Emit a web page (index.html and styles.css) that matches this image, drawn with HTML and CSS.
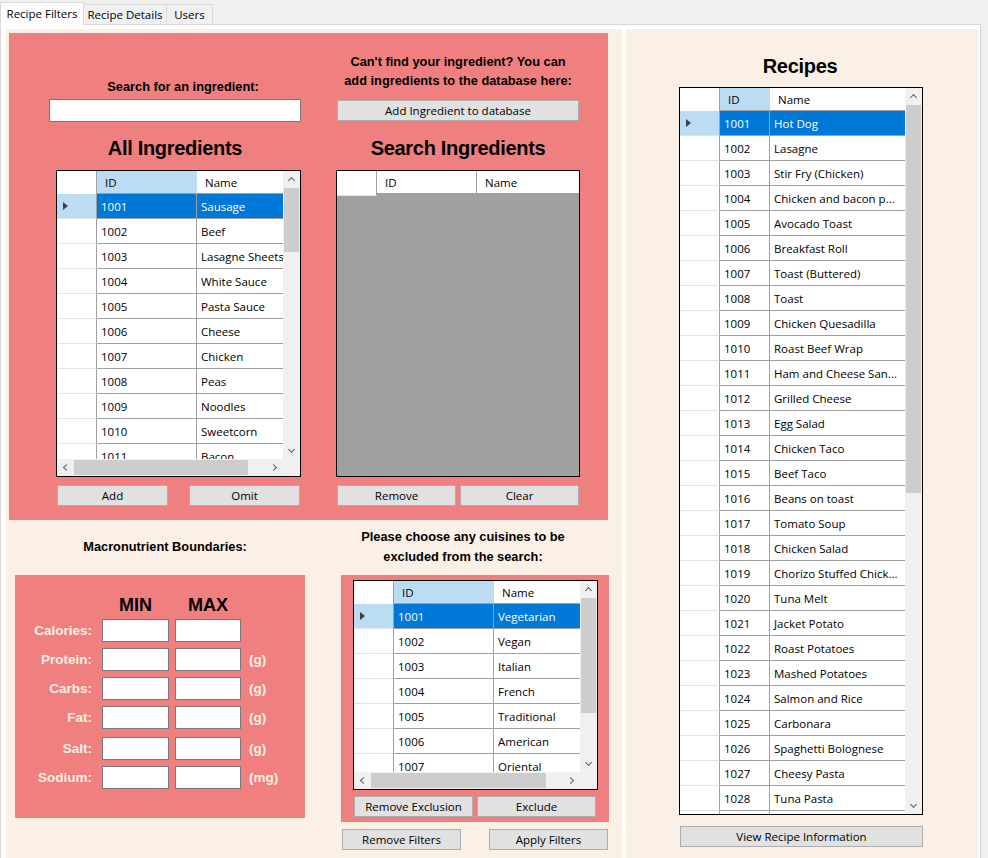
FILE: index.html
```html
<!DOCTYPE html>
<html lang="en">
<head>
    <meta charset="UTF-8">
    <title>Recipe Filters</title>
    <link rel="stylesheet" href="styles.css">
</head>
<body>
    <div class="tabs">
        <div class="tab active">Recipe Filters</div>
        <div class="tab">Recipe Details</div>
        <div class="tab tab-users">Users</div>
    </div>

    <div class="page">
        <div class="left">
            <div class="filter-box">
                <div class="col col-search">
                    <p class="lbl search-lbl">Search for an ingredient:</p>
                    <input class="txt search-txt" type="text">
                    <p class="title">All Ingredients</p>

                    <div class="dgv ing">
                        <div class="dgv-main">
                            <div class="dgv-head">
                                <span class="hc rh"></span>
                                <span class="hc id cur">ID</span>
                                <span class="hc nm">Name</span>
                            </div>
                            <div class="row sel"><span class="rh"></span><span class="c id">1001</span><span class="c nm">Sausage</span></div>
                            <div class="row"><span class="rh"></span><span class="c id">1002</span><span class="c nm">Beef</span></div>
                            <div class="row"><span class="rh"></span><span class="c id">1003</span><span class="c nm">Lasagne Sheets</span></div>
                            <div class="row"><span class="rh"></span><span class="c id">1004</span><span class="c nm">White Sauce</span></div>
                            <div class="row"><span class="rh"></span><span class="c id">1005</span><span class="c nm">Pasta Sauce</span></div>
                            <div class="row"><span class="rh"></span><span class="c id">1006</span><span class="c nm">Cheese</span></div>
                            <div class="row"><span class="rh"></span><span class="c id">1007</span><span class="c nm">Chicken</span></div>
                            <div class="row"><span class="rh"></span><span class="c id">1008</span><span class="c nm">Peas</span></div>
                            <div class="row"><span class="rh"></span><span class="c id">1009</span><span class="c nm">Noodles</span></div>
                            <div class="row"><span class="rh"></span><span class="c id">1010</span><span class="c nm">Sweetcorn</span></div>
                            <div class="row"><span class="rh"></span><span class="c id">1011</span><span class="c nm">Bacon</span></div>
                        </div>
                        <div class="vscroll">
                            <span class="arr up"></span>
                            <span class="track"><span class="thumb"></span></span>
                            <span class="arr down"></span>
                        </div>
                        <div class="hscroll">
                            <span class="arr lft"></span>
                            <span class="track"><span class="thumb"></span></span>
                            <span class="arr rgt"></span>
                        </div>
                        <div class="corner"></div>
                    </div>

                    <div class="btn-row">
                        <button class="btn btn-wide">Add</button>
                        <button class="btn btn-wide">Omit</button>
                    </div>
                </div>

                <div class="col col-results">
                    <p class="lbl add-lbl">Can't find your ingredient? You can<br>add ingredients to the database here:</p>
                    <button class="btn btn-add">Add Ingredient to database</button>
                    <p class="title">Search Ingredients</p>

                    <div class="dgv empty">
                        <div class="dgv-head">
                            <span class="hc rh"></span>
                            <span class="hc id">ID</span>
                            <span class="hc nm">Name</span>
                        </div>
                    </div>

                    <div class="btn-row">
                        <button class="btn">Remove</button>
                        <button class="btn">Clear</button>
                    </div>
                </div>
            </div>

            <div class="bottom">
                <div class="macros">
                    <p class="lbl macro-lbl">Macronutrient Boundaries:</p>
                    <div class="macro-box">
                        <div class="mrow mhead">
                            <span class="mlbl"></span>
                            <span class="mcol min">MIN</span>
                            <span class="mcol max">MAX</span>
                        </div>
                        <div class="mrow"><span class="mlbl">Calories:</span><input class="txt min" type="text"><input class="txt max" type="text"></div>
                        <div class="mrow"><span class="mlbl">Protein:</span><input class="txt min" type="text"><input class="txt max" type="text"><span class="unit">(g)</span></div>
                        <div class="mrow"><span class="mlbl">Carbs:</span><input class="txt min" type="text"><input class="txt max" type="text"><span class="unit">(g)</span></div>
                        <div class="mrow"><span class="mlbl">Fat:</span><input class="txt min" type="text"><input class="txt max" type="text"><span class="unit">(g)</span></div>
                        <div class="mrow salt"><span class="mlbl">Salt:</span><input class="txt min" type="text"><input class="txt max" type="text"><span class="unit">(g)</span></div>
                        <div class="mrow"><span class="mlbl">Sodium:</span><input class="txt min" type="text"><input class="txt max" type="text"><span class="unit">(mg)</span></div>
                    </div>
                </div>

                <div class="cuisines">
                    <p class="lbl cuisine-lbl">Please choose any cuisines to be<br>excluded from the search:</p>
                    <div class="cuisine-box">
                        <div class="dgv cus">
                            <div class="dgv-main">
                                <div class="dgv-head">
                                    <span class="hc rh"></span>
                                    <span class="hc id cur">ID</span>
                                    <span class="hc nm">Name</span>
                                </div>
                                <div class="row sel"><span class="rh"></span><span class="c id">1001</span><span class="c nm">Vegetarian</span></div>
                                <div class="row"><span class="rh"></span><span class="c id">1002</span><span class="c nm">Vegan</span></div>
                                <div class="row"><span class="rh"></span><span class="c id">1003</span><span class="c nm">Italian</span></div>
                                <div class="row"><span class="rh"></span><span class="c id">1004</span><span class="c nm">French</span></div>
                                <div class="row"><span class="rh"></span><span class="c id">1005</span><span class="c nm">Traditional</span></div>
                                <div class="row"><span class="rh"></span><span class="c id">1006</span><span class="c nm">American</span></div>
                                <div class="row"><span class="rh"></span><span class="c id">1007</span><span class="c nm">Oriental</span></div>
                            </div>
                            <div class="vscroll">
                                <span class="arr up"></span>
                                <span class="track"><span class="thumb"></span></span>
                                <span class="arr down"></span>
                            </div>
                            <div class="hscroll">
                                <span class="arr lft"></span>
                                <span class="track"><span class="thumb"></span></span>
                                <span class="arr rgt"></span>
                            </div>
                            <div class="corner"></div>
                        </div>
                        <div class="btn-row">
                            <button class="btn">Remove Exclusion</button>
                            <button class="btn">Exclude</button>
                        </div>
                    </div>
                    <div class="btn-row filter-btns">
                        <button class="btn">Remove Filters</button>
                        <button class="btn">Apply Filters</button>
                    </div>
                </div>
            </div>
        </div>

        <div class="right">
            <p class="title recipes-title">Recipes</p>
            <div class="dgv rec">
                <div class="dgv-main">
                    <div class="dgv-head">
                        <span class="hc rh"></span>
                        <span class="hc id cur">ID</span>
                        <span class="hc nm">Name</span>
                    </div>
                    <div class="row sel"><span class="rh"></span><span class="c id">1001</span><span class="c nm">Hot Dog</span></div>
                    <div class="row"><span class="rh"></span><span class="c id">1002</span><span class="c nm">Lasagne</span></div>
                    <div class="row"><span class="rh"></span><span class="c id">1003</span><span class="c nm">Stir Fry (Chicken)</span></div>
                    <div class="row"><span class="rh"></span><span class="c id">1004</span><span class="c nm">Chicken and bacon p...</span></div>
                    <div class="row"><span class="rh"></span><span class="c id">1005</span><span class="c nm">Avocado Toast</span></div>
                    <div class="row"><span class="rh"></span><span class="c id">1006</span><span class="c nm">Breakfast Roll</span></div>
                    <div class="row"><span class="rh"></span><span class="c id">1007</span><span class="c nm">Toast (Buttered)</span></div>
                    <div class="row"><span class="rh"></span><span class="c id">1008</span><span class="c nm">Toast</span></div>
                    <div class="row"><span class="rh"></span><span class="c id">1009</span><span class="c nm">Chicken Quesadilla</span></div>
                    <div class="row"><span class="rh"></span><span class="c id">1010</span><span class="c nm">Roast Beef Wrap</span></div>
                    <div class="row"><span class="rh"></span><span class="c id">1011</span><span class="c nm">Ham and Cheese San...</span></div>
                    <div class="row"><span class="rh"></span><span class="c id">1012</span><span class="c nm">Grilled Cheese</span></div>
                    <div class="row"><span class="rh"></span><span class="c id">1013</span><span class="c nm">Egg Salad</span></div>
                    <div class="row"><span class="rh"></span><span class="c id">1014</span><span class="c nm">Chicken Taco</span></div>
                    <div class="row"><span class="rh"></span><span class="c id">1015</span><span class="c nm">Beef Taco</span></div>
                    <div class="row"><span class="rh"></span><span class="c id">1016</span><span class="c nm">Beans on toast</span></div>
                    <div class="row"><span class="rh"></span><span class="c id">1017</span><span class="c nm">Tomato Soup</span></div>
                    <div class="row"><span class="rh"></span><span class="c id">1018</span><span class="c nm">Chicken Salad</span></div>
                    <div class="row"><span class="rh"></span><span class="c id">1019</span><span class="c nm">Chorizo Stuffed Chick...</span></div>
                    <div class="row"><span class="rh"></span><span class="c id">1020</span><span class="c nm">Tuna Melt</span></div>
                    <div class="row"><span class="rh"></span><span class="c id">1021</span><span class="c nm">Jacket Potato</span></div>
                    <div class="row"><span class="rh"></span><span class="c id">1022</span><span class="c nm">Roast Potatoes</span></div>
                    <div class="row"><span class="rh"></span><span class="c id">1023</span><span class="c nm">Mashed Potatoes</span></div>
                    <div class="row"><span class="rh"></span><span class="c id">1024</span><span class="c nm">Salmon and Rice</span></div>
                    <div class="row"><span class="rh"></span><span class="c id">1025</span><span class="c nm">Carbonara</span></div>
                    <div class="row"><span class="rh"></span><span class="c id">1026</span><span class="c nm">Spaghetti Bolognese</span></div>
                    <div class="row"><span class="rh"></span><span class="c id">1027</span><span class="c nm">Cheesy Pasta</span></div>
                    <div class="row"><span class="rh"></span><span class="c id">1028</span><span class="c nm">Tuna Pasta</span></div>
                    <div class="row"><span class="rh"></span><span class="c id"></span><span class="c nm"></span></div>
                </div>
                <div class="vscroll">
                    <span class="arr up"></span>
                    <span class="track"><span class="thumb"></span></span>
                    <span class="arr down"></span>
                </div>
            </div>
            <button class="btn btn-view">View Recipe Information</button>
        </div>
    </div>
</body>
</html>
```

FILE: styles.css
```css
body {
    margin: 0;
    width: 988px;
    height: 858px;
    overflow: hidden;
    background-color: #f0f0f0;
    color: #000;
    font-family: "Open Sans", "Noto Sans", sans-serif;
    font-size: 11.5px;
}

p {
    margin: 0;
}

/* tab strip */
.tabs {
    display: flex;
    align-items: flex-end;
    height: 24px;
    box-sizing: border-box;
    padding-top: 2px;
}

.tab {
    width: 84px;
    height: 20px;
    line-height: 19px;
    text-align: center;
    box-sizing: border-box;
    border: 1px solid #d9d9d9;
    border-bottom: none;
    background-color: #f0f0f0;
    margin-left: -1px;
}

.tab.active {
    width: 84px;
    height: 23px;
    margin-left: 0;
    margin-bottom: -1px;
    line-height: 21px;
    background-color: #fff;
    position: relative;
    z-index: 1;
}

.tab-users {
    width: 47px;
}

.page {
    display: flex;
    gap: 4px;
    width: 981px;
    height: 840px;
    box-sizing: border-box;
    padding: 4px 2px 0 5px;
    background-color: #fff;
    border: 1px solid #d9d9d9;
}

.left {
    width: 616px;
    flex: none;
    background-color: #faf0e6;
    padding: 4px 0 0 3px;
    box-sizing: border-box;
}

.right {
    width: 352px;
    flex: none;
    background-color: #faf0e6;
    display: flex;
    flex-direction: column;
}

/* shared bits */
.lbl {
    font-family: "Liberation Sans", Arial, sans-serif;
    font-weight: bold;
    font-size: 12.8px;
    line-height: 15px;
    text-align: center;
}

.title {
    font-family: "Liberation Sans", Arial, sans-serif;
    font-weight: bold;
    font-size: 20px;
    letter-spacing: -0.3px;
    line-height: 24px;
    text-align: center;
}

.txt {
    display: block;
    height: 23px;
    box-sizing: border-box;
    margin: 0;
    padding: 0 3px;
    border: 1px solid #7a7a7a;
    background-color: #fff;
    outline: none;
}

.btn {
    height: 21px;
    width: 119px;
    box-sizing: border-box;
    margin: 0;
    padding: 0;
    border: 1px solid #adadad;
    background-color: #e1e1e1;
    color: #000;
    font-family: "Open Sans", "Noto Sans", sans-serif;
    font-size: 11.5px;
    line-height: 18px;
}

.btn-row {
    display: flex;
    gap: 4px;
    margin-top: 8px;
    margin-left: 1px;
}

/* top filter box */
.filter-box {
    display: flex;
    gap: 35px;
    width: 599px;
    height: 487px;
    box-sizing: border-box;
    padding-left: 40px;
    background-color: #f08080;
}

.col {
    display: flex;
    flex-direction: column;
}

.col-search {
    width: 252px;
}

.col-results {
    width: 244px;
}

.search-lbl {
    margin-top: 46px;
    padding-left: 16px;
}

.search-txt {
    margin-top: 5px;
    width: 252px;
}

.col-search .title {
    margin-top: 14px;
}

.col-search .dgv {
    margin-top: 10px;
    margin-left: 7px;
}

.col-search .btn-row {
    margin-left: 8px;
    gap: 21px;
}

.btn-wide {
    width: 111px;
}

.add-lbl {
    margin-top: 19px;
    line-height: 19px;
}

.btn-add {
    margin-top: 10px;
    margin-left: 1px;
    width: 242px;
}

.col-results .title {
    margin-top: 15px;
}

.col-results .dgv {
    margin-top: 10px;
}

/* data grid */
.dgv {
    display: grid;
    grid-template-columns: 1fr 17px;
    grid-template-rows: 1fr 17px;
    width: 245px;
    height: 307px;
    box-sizing: border-box;
    border: 1px solid #000;
    background-color: #fff;
    overflow: hidden;
}

.dgv-main {
    overflow: hidden;
}

.dgv-head {
    display: flex;
    height: 23px;
}

.hc {
    flex: none;
    height: 23px;
    line-height: 24px;
    box-sizing: border-box;
    padding-left: 8px;
    border-bottom: 1px solid #a0a0a0;
    background-color: #fff;
    white-space: nowrap;
}

.hc.rh {
    border-bottom-color: #e3e3e3;
}

.hc.cur {
    background-color: #bcdcf4;
}

.row {
    display: flex;
    height: 25px;
}

.rh,
.c {
    flex: none;
    height: 25px;
    box-sizing: border-box;
    border-bottom: 1px solid #a0a0a0;
    border-right: 1px solid #a0a0a0;
    white-space: nowrap;
    overflow: hidden;
}

.c {
    padding-left: 4px;
    line-height: 26px;
}

.row .rh {
    display: flex;
    align-items: center;
    padding-left: 6px;
    border-bottom-color: #e3e3e3;
}

.rh {
    width: 40px;
}

.id {
    width: 100px;
}

.nm {
    width: 110px;
}

.sel .c {
    background-color: #0078d7;
    color: #fff;
}

.sel .rh {
    background-color: #bcdcf4;
}

.sel .rh::before {
    content: "";
    border-left: 5px solid #404040;
    border-top: 4.5px solid transparent;
    border-bottom: 4.5px solid transparent;
}

.vscroll {
    display: flex;
    flex-direction: column;
    background-color: #f0f0f0;
}

.hscroll {
    display: flex;
    background-color: #f0f0f0;
}

.corner {
    background-color: #f0f0f0;
}

.arr {
    flex: none;
    width: 17px;
    height: 17px;
    display: flex;
    align-items: center;
    justify-content: center;
}

.arr::before {
    content: "";
    width: 4px;
    height: 4px;
    border-top: 1.5px solid #606060;
    border-left: 1.5px solid #606060;
}

.up::before {
    transform: translateY(1px) rotate(45deg);
}

.down::before {
    transform: translateY(-1px) rotate(225deg);
}

.lft::before {
    transform: translateX(1px) rotate(-45deg);
}

.rgt::before {
    transform: translateX(-1px) rotate(135deg);
}

.track {
    flex: 1;
    display: flex;
}

.vscroll .track {
    flex-direction: column;
}

.thumb {
    background-color: #cdcdcd;
}

.vscroll .thumb {
    margin: 0 1px;
}

.hscroll .thumb {
    margin: 1px 0;
}

.ing .vscroll .thumb {
    height: 64px;
}

.ing .hscroll .thumb {
    width: 174px;
}

.empty {
    display: block;
    width: 244px;
    background-color: #a0a0a0;
}

.empty .hc {
    border-right: 1px solid #a0a0a0;
}

.empty .nm {
    width: 102px;
    border-right: none;
}

/* bottom area */
.bottom {
    display: flex;
}

.macros {
    width: 290px;
    margin-left: 6px;
}

.macro-lbl {
    margin-top: 19px;
    padding-left: 10px;
}

.macro-box {
    margin-top: 21px;
    height: 243px;
    box-sizing: border-box;
    padding-top: 20px;
    background-color: #f08080;
    color: #faf0e6;
    font-family: "Liberation Sans", Arial, sans-serif;
    font-weight: bold;
    font-size: 13.5px;
}

.mrow {
    display: flex;
    align-items: center;
    margin-top: 6px;
}

.mhead {
    margin-top: 0;
    height: 20px;
    margin-bottom: -2px;
}

.mrow.salt {
    margin-top: 8px;
}

.mlbl {
    width: 77px;
    margin-right: 10px;
    text-align: right;
}

.mrow .min {
    width: 67px;
    margin-right: 6px;
}

.mrow .max {
    width: 66px;
}

.mcol {
    color: #000;
    font-size: 18px;
    line-height: 20px;
    text-align: center;
}

.unit {
    margin-left: 8px;
}

.cuisines {
    width: 268px;
    margin-left: 36px;
}

.cuisine-lbl {
    margin-top: 7px;
    margin-bottom: -1px;
    line-height: 20px;
    padding-right: 24px;
}

.cuisine-box {
    margin-top: 9px;
    height: 247px;
    box-sizing: border-box;
    padding: 5px 0 0 12px;
    background-color: #f08080;
}

.cus {
    height: 210px;
}

.cus .nm {
    width: 100px;
}

.cus .vscroll .thumb {
    height: 115px;
}

.cus .hscroll .thumb {
    width: 175px;
}

.cuisine-box .btn-row {
    margin-top: 6px;
}

.filter-btns {
    margin-top: 7px;
    gap: 28px;
}

/* recipes panel */
.recipes-title {
    margin-top: 25px;
    padding-right: 4px;
}

.rec {
    grid-template-rows: 1fr;
    width: 244px;
    height: 728px;
    margin-top: 9px;
    margin-left: 53px;
}

.rec .id {
    width: 50px;
}

.rec .nm {
    width: 135px;
    border-right: none;
}

.rec .vscroll .thumb {
    height: 388px;
}

.btn-view {
    width: 243px;
    margin-top: 11px;
    margin-left: 54px;
}
```
